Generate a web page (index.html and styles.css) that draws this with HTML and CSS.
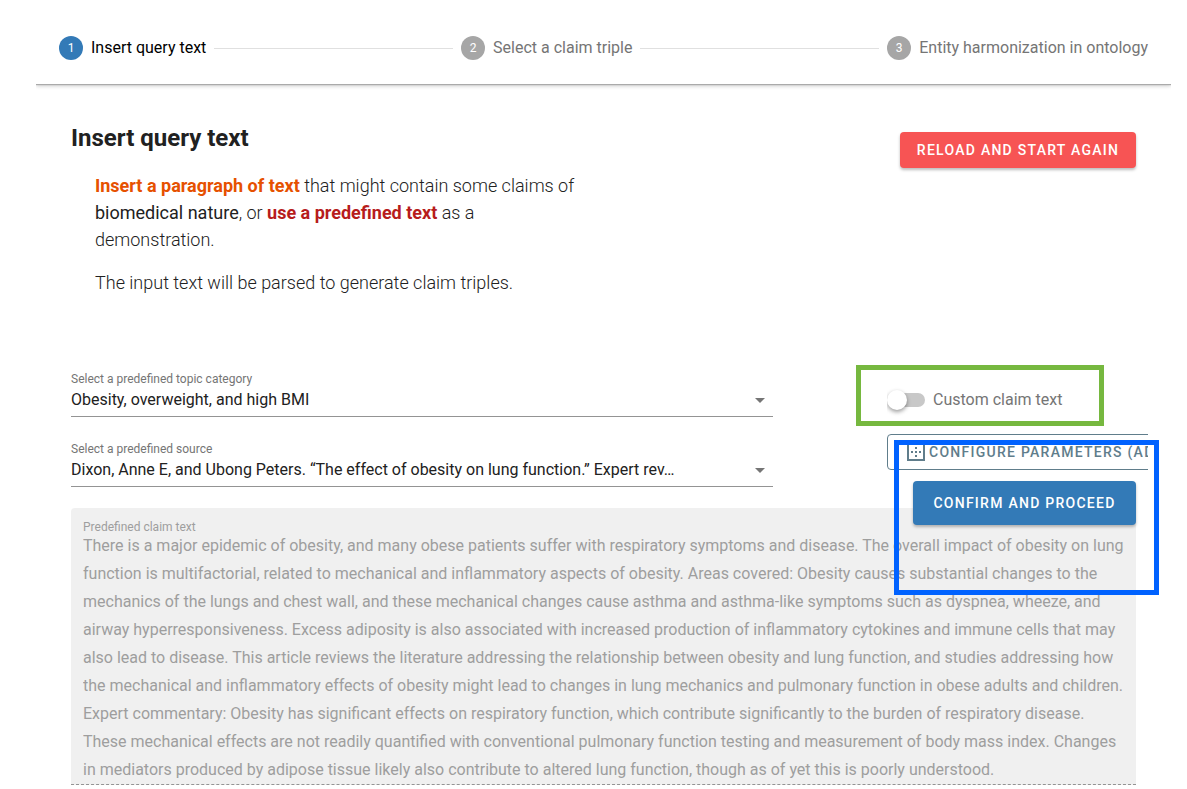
FILE: index.html
```html
<!DOCTYPE html>
<html lang="en">
<head>
<meta charset="utf-8">
<meta name="viewport" content="width=device-width, initial-scale=1">
<title>Insert query text</title>
<link rel="stylesheet" href="styles.css">
</head>
<body>
<main class="page">
  <ol class="stepper">
    <li class="step step-active"><span class="step-number">1</span><span>Insert query text</span></li>
    <li class="step-line" aria-hidden="true"></li>
    <li class="step"><span class="step-number">2</span><span>Select a claim triple</span></li>
    <li class="step-line" aria-hidden="true"></li>
    <li class="step"><span class="step-number">3</span><span>Entity harmonization in ontology</span></li>
  </ol>

  <section class="content">
    <div class="intro">
      <div class="intro-text">
        <h1 class="title">Insert query text</h1>
        <p><strong class="orange">Insert a paragraph of text</strong> that might contain some claims of <span class="regular">biomedical nature</span>, or <strong class="red">use a predefined text</strong> as a demonstration.</p>
        <p>The input text will be parsed to generate claim triples.</p>
      </div>
      <button class="button button-reload" type="button">Reload and start again</button>
    </div>

    <form class="form">
      <div class="controls">
        <div class="selects">
          <div class="field">
            <label for="topic">Select a predefined topic category</label>
            <div class="select-box">
              <select id="topic"><option>Obesity, overweight, and high BMI</option></select>
              <svg class="arrow" viewBox="0 0 10 5" aria-hidden="true"><path d="M0 0h10L5 5z"/></svg>
            </div>
          </div>
          <div class="field">
            <label for="source">Select a predefined source</label>
            <div class="select-box">
              <select id="source"><option>Dixon, Anne E, and Ubong Peters. “The effect of obesity on lung function.” Expert rev…</option></select>
              <svg class="arrow" viewBox="0 0 10 5" aria-hidden="true"><path d="M0 0h10L5 5z"/></svg>
            </div>
          </div>
        </div>
        <div class="options">
          <label class="switch-label"><input class="switch" type="checkbox" role="switch">Custom claim text</label>
          <button class="button button-configure" type="button">
            <svg class="grid-icon" viewBox="0 0 18 18" aria-hidden="true"><path fill-rule="evenodd" d="M0 0h18v18H0zM2 2v14h14V2zM8 4h2v2H8zM8 8h2v2H8zM8 12h2v2H8zM4 8h2v2H4zM12 8h2v2h-2z"/></svg>
            <span>Configure parameters (advanced)</span>
          </button>
        </div>
        <span class="highlight highlight-green"></span>
      </div>

      <div class="claim">
        <div class="claim-field">
          <label for="claim">Predefined claim text</label>
          <textarea id="claim" rows="9" disabled>There is a major epidemic of obesity, and many obese patients suffer with respiratory symptoms and disease. The overall impact of obesity on lung function is multifactorial, related to mechanical and inflammatory aspects of obesity. Areas covered: Obesity causes substantial changes to the mechanics of the lungs and chest wall, and these mechanical changes cause asthma and asthma-like symptoms such as dyspnea, wheeze, and airway hyperresponsiveness. Excess adiposity is also associated with increased production of inflammatory cytokines and immune cells that may also lead to disease. This article reviews the literature addressing the relationship between obesity and lung function, and studies addressing how the mechanical and inflammatory effects of obesity might lead to changes in lung mechanics and pulmonary function in obese adults and children. Expert commentary: Obesity has significant effects on respiratory function, which contribute significantly to the burden of respiratory disease. These mechanical effects are not readily quantified with conventional pulmonary function testing and measurement of body mass index. Changes in mediators produced by adipose tissue likely also contribute to altered lung function, though as of yet this is poorly understood.</textarea>
        </div>
        <button class="button button-confirm" type="submit">Confirm and proceed</button>
        <span class="highlight highlight-blue"></span>
      </div>
    </form>
  </section>
</main>
</body>
</html>
```
FILE: styles.css
```css
* { box-sizing: border-box; }

body {
  margin: 0;
  background: #fff;
  color: #212121;
  font-family: Roboto, "Liberation Sans", sans-serif;
  font-size: 16px;
}

button, select, textarea { font: inherit; }

.page { padding: 12px 16px 0 36px; }

.stepper {
  display: flex;
  align-items: center;
  gap: 8px;
  height: 72px;
  margin: 0;
  padding: 0 23px;
  list-style: none;
  box-shadow: 0 1px 1px #aaa, 0 2px 4px #ccc;
  clip-path: inset(0 0 -8px 0);
}

.step {
  display: flex;
  align-items: center;
  gap: 8px;
  color: #757575;
  line-height: 18px;
  white-space: nowrap;
}

.step-active { color: #000; }

.step-number {
  display: grid;
  place-items: center;
  width: 24px;
  height: 24px;
  border-radius: 50%;
  background: #a6a6a6;
  color: #fff;
  font-size: 12px;
}

.step-active .step-number { background: #337ab7; }

.step-line {
  flex: 1;
  height: 1px;
  background: #e0e0e0;
}

.content {
  margin: 0 23px;
  padding: 36px 12px 0;
}

.intro {
  display: flex;
  justify-content: space-between;
  align-items: flex-start;
}

.title {
  margin: 0 0 16px;
  font-size: 24px;
  font-weight: 700;
  line-height: 36px;
}

.intro p {
  max-width: 512px;
  margin: 0 0 16px;
  padding: 0 0 0 24px;
  font-size: 18px;
  font-weight: 300;
  line-height: 27px;
}

.orange { color: #e65100; font-weight: 700; }
.red { color: #b71c1c; font-weight: 700; }
.regular { font-weight: 400; }

.button {
  display: flex;
  align-items: center;
  justify-content: center;
  height: 36px;
  padding: 0 16px;
  border: 0;
  border-radius: 4px;
  color: #fff;
  font-size: 14px;
  font-weight: 500;
  letter-spacing: 0.09em;
  text-transform: uppercase;
  white-space: nowrap;
  box-shadow: 0 2px 3px #0004;
}

.button-reload {
  min-width: 236px;
  margin-top: 12px;
  background: #f75454;
}

.form { margin-top: 60px; }

.controls {
  position: relative;
  display: grid;
  grid-template-columns: 702fr 249fr;
  column-gap: 114px;
  align-items: start;
}

.selects {
  display: grid;
  gap: 25px;
  min-width: 0;
}

.field label {
  display: block;
  color: #757575;
  font-size: 12px;
  line-height: 14px;
}

.select-box {
  position: relative;
  border-bottom: 1px solid #949494;
}

select {
  display: block;
  width: 100%;
  height: 30px;
  padding: 0 72px 4px 0;
  border: 0;
  background: none;
  color: #212121;
  appearance: none;
  text-overflow: ellipsis;
}

.arrow {
  position: absolute;
  top: 12px;
  right: 8px;
  width: 10px;
  height: 5px;
  fill: #757575;
  pointer-events: none;
}

.options {
  display: grid;
  gap: 22px;
  min-width: 0;
  margin-right: -12px;
  padding-top: 16px;
  overflow: hidden;
}

.switch-label {
  display: flex;
  align-items: center;
  gap: 8px;
  height: 24px;
  color: #757575;
  line-height: 18px;
}

.switch {
  position: relative;
  width: 36px;
  height: 14px;
  margin: 0 0 0 2px;
  border-radius: 7px;
  background: #c8c8c8;
  appearance: none;
}

.switch::before {
  content: "";
  position: absolute;
  top: -3px;
  left: -2px;
  width: 20px;
  height: 20px;
  border-radius: 50%;
  background: #fff;
  box-shadow: 0 2px 4px #0006;
}

.switch:checked::before { left: 18px; }

.button-configure {
  justify-content: flex-start;
  gap: 4px;
  width: max-content;
  padding: 0 19px;
  border: 1px solid #607d8b;
  background: none;
  color: #607d8b;
  box-shadow: none;
}

.grid-icon {
  width: 18px;
  height: 18px;
  fill: currentColor;
}

.claim {
  position: relative;
  margin-top: 21px;
}

.claim-field {
  padding: 12px 12px 0;
  border-bottom: 1px dashed #949494;
  border-radius: 4px 4px 0 0;
  background: #f0f0f0;
  color: #9e9e9e;
}

.claim-field label {
  display: block;
  height: 12px;
  font-size: 12px;
  line-height: 14px;
}

textarea {
  display: block;
  width: 100%;
  height: 252px;
  padding: 0;
  border: 0;
  background: none;
  color: inherit;
  line-height: 28px;
  resize: none;
  overflow: hidden;
}

.button-confirm {
  position: absolute;
  top: -27px;
  right: 0;
  width: 223px;
  height: 44px;
  background: #337ab7;
}

.highlight {
  position: absolute;
  pointer-events: none;
}

.highlight-green {
  top: -7px;
  right: 32px;
  width: 248px;
  height: 61px;
  border: 5px solid #76b83f;
}

.highlight-blue {
  top: -68px;
  right: -23px;
  width: 265px;
  height: 155px;
  border: 5px solid #0062ff;
}
```
